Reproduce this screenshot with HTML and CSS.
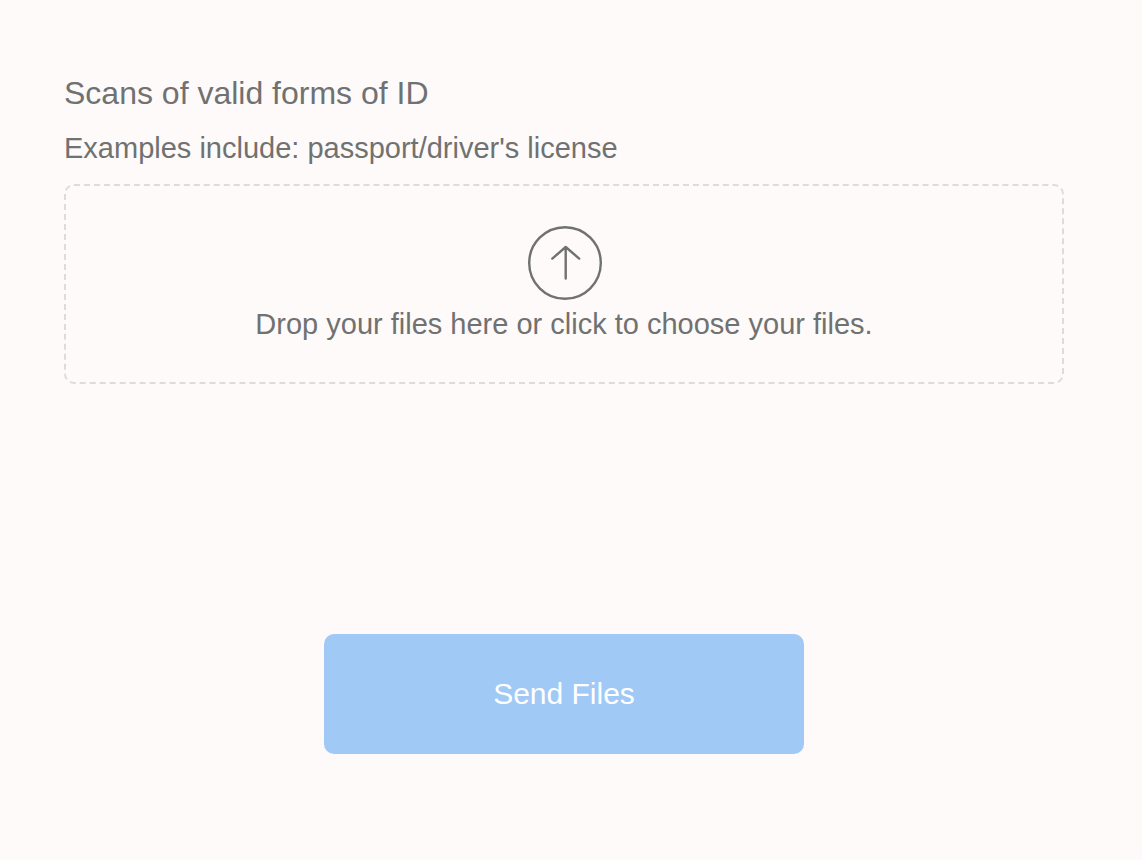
FILE: index.html
```html
<!DOCTYPE html>
<html lang="en">
  <head>
    <meta charset="UTF-8" />
    <meta name="viewport" content="width=device-width, initial-scale=1.0" />
    <title>Send Files</title>
    <link rel="stylesheet" href="styles.css">
  </head>
  <body>
    <form class="upload-form">
      <h1 class="upload-title" id="upload-title">Scans of valid forms of ID</h1>
      <p class="upload-hint" id="upload-hint">Examples include: passport/driver's license</p>
      <label class="dropzone">
        <input class="dropzone-input" type="file" multiple aria-describedby="upload-title upload-hint" />
        <svg class="dropzone-icon" viewBox="0 0 76 74" aria-hidden="true">
          <circle cx="39" cy="37" r="35.8" />
          <path d="M39.7 52.6V21M26.3 32.6L39.7 21L53.2 32.6" />
        </svg>
        <span class="dropzone-text">Drop your files here or click to choose your files.</span>
      </label>
      <button class="send-button" type="submit">Send Files</button>
    </form>
  </body>
</html>
```
FILE: styles.css
```css
* {
  box-sizing: border-box;
}

body {
  margin: 0;
  background: #fefaf9;
  color: #707171;
  font-family: "Liberation Sans", Arial, sans-serif;
}

.upload-form {
  display: flex;
  flex-direction: column;
  padding: 74px 78px 106px 64px;
}

.upload-title {
  margin: 0;
  font-size: 32px;
  font-weight: 400;
  line-height: 38px;
}

.upload-hint {
  margin: 18px 0;
  font-size: 29px;
  line-height: 36px;
}

.dropzone {
  position: relative;
  display: flex;
  flex-direction: column;
  align-items: center;
  gap: 6px;
  padding: 40px 20px;
  border: 2px dashed #dcdcdb;
  border-radius: 10px;
  cursor: pointer;
}

/* invisible input covers the whole area so files can be dropped on it */
.dropzone-input {
  position: absolute;
  inset: 0;
  width: 100%;
  height: 100%;
  opacity: 0;
  cursor: pointer;
}

.dropzone-icon {
  width: 76px;
  height: 74px;
  fill: none;
  stroke: #707171;
  stroke-width: 2.4;
  stroke-linecap: round;
  stroke-linejoin: round;
}

.dropzone-text {
  font-size: 29px;
  line-height: 36px;
  text-align: center;
}

.send-button {
  align-self: center;
  width: 480px;
  max-width: 100%;
  height: 120px;
  margin-top: 250px;
  border: 0;
  border-radius: 10px;
  background: #a0c9f5;
  color: #fff;
  font-family: inherit;
  font-size: 30px;
  cursor: pointer;
}
```
